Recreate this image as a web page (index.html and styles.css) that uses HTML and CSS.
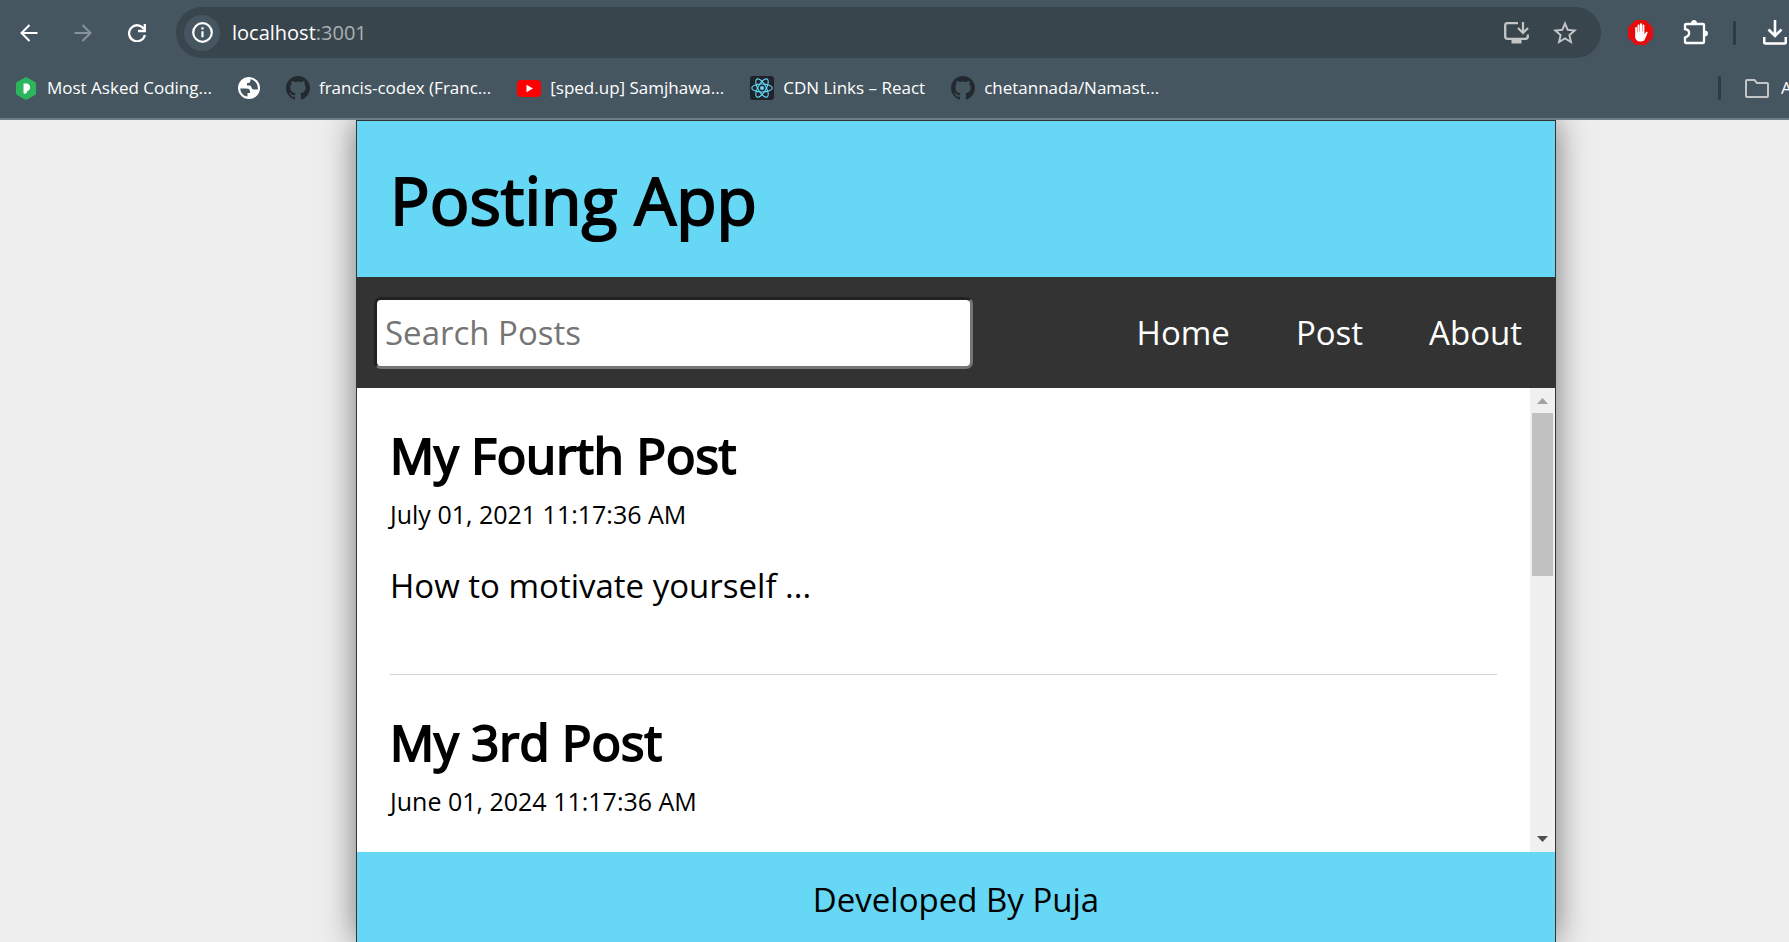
FILE: index.html
```html
<!DOCTYPE html>
<html lang="en">
<head>
<meta charset="utf-8">
<title>Posting App</title>
<link rel="stylesheet" href="styles.css">
</head>
<body>
<svg class="defs" aria-hidden="true">
  <symbol id="octocat" viewBox="0 0 16 16"><path fill="#24292f" d="M8 0C3.58 0 0 3.58 0 8c0 3.54 2.29 6.53 5.47 7.59.4.07.55-.17.55-.38 0-.19-.01-.82-.01-1.49-2.01.37-2.53-.49-2.69-.94-.09-.23-.48-.94-.82-1.13-.28-.15-.68-.52-.01-.53.63-.01 1.08.58 1.23.82.72 1.21 1.87.87 2.33.66.07-.52.28-.87.51-1.07-1.78-.2-3.64-.89-3.64-3.95 0-.87.31-1.59.82-2.15-.08-.2-.36-1.02.08-2.12 0 0 .67-.21 2.2.82.64-.18 1.32-.27 2-.27s1.36.09 2 .27c1.53-1.04 2.2-.82 2.2-.82.44 1.1.16 1.92.08 2.12.51.56.82 1.27.82 2.15 0 3.07-1.87 3.75-3.65 3.95.29.25.54.73.54 1.48 0 1.07-.01 1.93-.01 2.2 0 .21.15.46.55.38A8.01 8.01 0 0 0 16 8c0-4.42-3.58-8-8-8z"/></symbol>
</svg>
<div class="browser">
  <div class="toolbar">
    <div class="history">
      <button class="icon-button" aria-label="Back"><svg width="18" height="18" viewBox="0 0 18 18"><path d="M17.500 9H2M9.500 1L1.500 9l8 8" fill="none" stroke="#fff" stroke-width="2"/></svg></button>
      <button class="icon-button" aria-label="Forward"><svg width="18" height="18" viewBox="0 0 18 18"><path d="M.5 9H16M8.500 1l8 8-8 8" fill="none" stroke="#87929a" stroke-width="2"/></svg></button>
      <button class="icon-button" aria-label="Reload"><svg width="18" height="18" viewBox="0 0 18 18"><path d="M16 5.200A8 8 0 1 0 16.900 11" fill="none" stroke="#fff" stroke-width="2.300"/><path d="M16.800 0v7H10" fill="none" stroke="#fff" stroke-width="2.300"/></svg></button>
    </div>
    <div class="address">
      <button class="site-info" aria-label="Site information"><svg width="21" height="21" viewBox="0 0 21 21"><circle cx="10.500" cy="10.500" r="9.300" fill="none" stroke="#fff" stroke-width="2.200"/><path d="M10.500 9.300v6M10.500 5.300v2.300" stroke="#fff" stroke-width="2.200"/></svg></button>
      <div class="url">localhost<span class="port">:3001</span></div>
      <button class="icon-button" aria-label="Install app"><svg width="25" height="22" viewBox="0 0 25 22"><path d="M14 1.200H3.500Q1.200 1.200 1.200 3.500v11Q1.200 16.800 3.500 16.800h18q2.300 0 2.300-2.300V12.500" fill="none" stroke="#c3c5c7" stroke-width="2.300"/><path d="M7.500 17h10v4.500h-10z" fill="#c3c5c7"/><path d="M19 0v10M14 6l5 5 5-5" fill="none" stroke="#c3c5c7" stroke-width="2.200"/></svg></button>
      <button class="icon-button" aria-label="Bookmark this tab"><svg width="24" height="23" viewBox="2 2 20 19"><path fill="#c3c5c7" d="m22 9.240-7.190-.62L12 2 9.190 8.630 2 9.240l5.460 4.730L5.820 21 12 17.270 18.180 21l-1.630-7.030L22 9.240zM12 15.400l-3.760 2.270 1-4.280-3.320-2.880 4.380-.38L12 6.100l1.710 4.040 4.380.38-3.320 2.880 1 4.280L12 15.400z"/></svg></button>
    </div>
    <div class="actions">
      <button class="icon-button" aria-label="Ad blocker"><svg width="25" height="25" viewBox="0 0 25 25"><path fill="#e40d0d" d="M7.500 0h10L25 7.500v10L17.500 25h-10L0 17.500v-10z"/><path fill="#fff" d="M7.200 8.200c0-1.500 1.900-1.500 1.900 0v4h.4V5.500c0-1.500 2-1.500 2 0v6h.4V4.300c0-1.500 2.100-1.500 2.100 0v7.200h.4V5.500c0-1.500 2-1.500 2 0v9l1.400-2.200c.8-1.200 2.300-.5 1.700.8l-2.500 6c-.8 1.800-2.200 2.500-4.200 2.500-3.400 0-5.600-1.800-5.600-5z"/></svg></button>
      <button class="icon-button" aria-label="Extensions"><svg width="25" height="25" viewBox="0 0 25 25"><path d="M3.500 4H20q1 0 1 1v17q0 1-1 1H3q-1 0-1-1v-4.500c5.500-1.500 5.500-7.500 0-8.500V5q0-1 1.500-1z" fill="none" stroke="#fff" stroke-width="2.300"/><path d="M8 3.500a3 3.500 0 0 1 6 0zM21.500 10.500a3.500 3 0 0 1 0 6z" fill="#fff"/></svg></button>
      <span class="divider"></span>
      <button class="icon-button" aria-label="Downloads"><svg width="24" height="25" viewBox="0 0 24 25"><path d="M12 0v15M5.500 9.500L12 16l6.500-6.500M1.200 17v5.500q0 1 1 1h19.600q1 0 1-1V17" fill="none" stroke="#fff" stroke-width="2.600"/></svg></button>
    </div>
  </div>
  <div class="bookmarks">
    <a class="bookmark" href="#"><svg class="hex" width="20" height="23" viewBox="0 0 20 23"><path fill="#2db55d" d="M9 .4q1-.6 2 0l8 4.600q1 .6 1 1.700v9.600q0 1.100-1 1.700l-8 4.600q-1 .6-2 0l-8-4.600q-1-.6-1-1.700V6.700Q0 5.600 1 5z"/><path fill="#fff" d="M7.500 6.500h2.800c5 0 5 7.500.6 7.500v1c0 1.800-3.400 2.500-3.400.5z"/></svg><span>Most Asked Coding...</span></a>
    <a class="bookmark" href="#" aria-label="Website"><svg width="22" height="22" viewBox="0 0 22 22"><circle cx="11" cy="11" r="11" fill="#fff"/><path d="M2.200 11.500H8c3 0 4 1.300 4 3v1.500H9.500v3.500C5.500 19 2.500 16 2.200 11.500zM12.500 2.300v1.200c0 2-1.200 2.500-3.500 2.500v2.500h3c1.500 0 1.500 4 3.500 4h4.300c.5-4.500-2-9.200-7.300-10.200z" fill="#455660"/></svg></a>
    <a class="bookmark" href="#"><svg width="24" height="24"><use href="#octocat"/></svg><span>francis-codex (Franc...</span></a>
    <a class="bookmark" href="#"><svg width="24" height="17" viewBox="0 0 24 17"><rect width="24" height="17" rx="4" fill="#f00"/><path d="M9.500 4.800l6.500 3.700-6.500 3.700z" fill="#fff"/></svg><span>[sped.up] Samjhawa...</span></a>
    <a class="bookmark" href="#"><svg width="24" height="24" viewBox="0 0 24 24"><rect width="24" height="24" rx="3" fill="#20232a"/><g fill="none" stroke="#61dafb" stroke-width="1.100"><ellipse cx="12" cy="12" rx="10.300" ry="4"/><ellipse cx="12" cy="12" rx="10.300" ry="4" transform="rotate(60 12 12)"/><ellipse cx="12" cy="12" rx="10.300" ry="4" transform="rotate(120 12 12)"/></g><circle cx="12" cy="12" r="2" fill="#61dafb"/></svg><span>CDN Links – React</span></a>
    <a class="bookmark" href="#"><svg width="24" height="24"><use href="#octocat"/></svg><span>chetannada/Namast...</span></a>
    <div class="all">
      <span class="divider"></span>
      <a class="bookmark folder" href="#"><svg width="24" height="19" viewBox="0 0 24 19"><path d="M2 1.100h7.500L12 4h10q1 0 1 1v11.900q0 1-1 1H2q-1 0-1-1V2q0-.9 1-.9z" fill="none" stroke="#c3c5c7" stroke-width="2"/></svg><span class="clip">A</span></a>
    </div>
  </div>
</div>
<div class="page">
  <div class="app">
    <header class="header"><h1>Posting App</h1></header>
    <nav class="nav">
      <form class="search"><input type="text" aria-label="Search Posts" placeholder="Search Posts"></form>
      <ul class="links">
        <li><a href="#">Home</a></li>
        <li><a href="#">Post</a></li>
        <li><a href="#">About</a></li>
      </ul>
    </nav>
    <main class="main">
      <div class="feed">
        <article class="post">
          <h2>My Fourth Post</h2>
          <p class="date">July 01, 2021 11:17:36 AM</p>
          <p class="body">How to motivate yourself ...</p>
        </article>
        <article class="post">
          <h2>My 3rd Post</h2>
          <p class="date">June 01, 2024 11:17:36 AM</p>
        </article>
      </div>
      <div class="scrollbar" aria-hidden="true">
        <svg class="arrow" width="11" height="6" viewBox="0 0 11 6"><path d="M5.500 0L11 6H0z" fill="#a3a3a3"/></svg>
        <div class="track"><div class="thumb"></div></div>
        <svg class="arrow" width="11" height="6" viewBox="0 0 11 6"><path d="M0 0h11L5.500 6z" fill="#505050"/></svg>
      </div>
    </main>
    <footer class="footer"><p>Developed By Puja</p></footer>
  </div>
</div>
</body>
</html>
```
FILE: styles.css
```css
* { box-sizing: border-box; margin: 0; padding: 0; }
body {
  height: 100vh;
  display: flex;
  flex-direction: column;
  overflow: hidden;
  background: #eee;
  color: #000;
  font-family: "Open Sans", sans-serif;
  font-size: 33px;
}
svg { display: block; flex: none; }
button { border: 0; background: none; }
a { color: inherit; text-decoration: none; }
.defs { position: absolute; width: 0; height: 0; }

.browser {
  position: relative;
  z-index: 1;
  flex: none;
  height: 120px;
  background: #455660;
  border-bottom: 2px solid #6f7d85;
  color: #fff;
}
.toolbar { display: flex; align-items: center; padding: 7px 2px 0 20px; }
.history { display: flex; gap: 36px; margin-right: 30px; }
.address {
  flex: 1;
  display: flex;
  align-items: center;
  gap: 24px;
  height: 51px;
  padding: 0 24px 0 8px;
  border-radius: 26px;
  background: #39454c;
}
.site-info {
  display: grid;
  place-items: center;
  width: 36px;
  height: 36px;
  border-radius: 50%;
  background: #455660;
}
.url { flex: 1; margin-left: -12px; font-size: 20px; }
.port { color: #aab0b4; }
.actions { display: flex; align-items: center; gap: 27px; margin-left: 27px; }
.actions .icon-button:first-child { margin-right: 3px; }
.divider { width: 3px; height: 24px; border-radius: 1px; background: #2f3a41; }
.actions .divider { margin-left: -2px; }

.bookmarks { display: flex; align-items: center; gap: 26px; height: 60px; padding-left: 16px; font-size: 17px; line-height: 22px; white-space: nowrap; }
.bookmark { display: flex; align-items: center; gap: 9px; }
.hex { margin-right: 2px; }
.all { display: flex; align-items: center; gap: 24px; margin-left: auto; }
.folder { gap: 12px; }
.clip { width: 8px; overflow: hidden; }

.page {
  flex: 1;
  min-height: 0;
  display: grid;
  grid-template-columns: 356fr minmax(0, 1200px) 233fr;
}
.app {
  grid-column: 2;
  min-height: 0;
  display: flex;
  flex-direction: column;
  border: 1px solid #333;
  border-bottom: 0;
  background: #fff;
  box-shadow: 0 0 31px rgba(0, 0, 0, .5);
}
h1, h2 { font-weight: 400; -webkit-text-stroke: 2px #000; }
.header { padding: 32px 33px; background: #66d8f5; }
h1 { font-size: 66px; line-height: 92px; }
.nav { display: flex; align-items: center; justify-content: space-between; height: 111px; padding-left: 17px; background: #333; }
.search { flex: 0 1 599px; }
.search input {
  display: block;
  width: 100%;
  height: 72px;
  padding: 0 8px;
  border: 3px inset #767676;
  border-radius: 7px;
  background: #fff;
  font: inherit;
}
.search input::placeholder { color: #757575; }
.links { display: flex; list-style: none; color: #fff; }
.links a { display: block; padding: 33px; line-height: 45px; }
.main { flex: 1; min-height: 0; display: flex; }
.feed { flex: 1; overflow: hidden; padding: 33px; }
.post + .post { margin-top: 33px; border-top: 1px solid #d3d3d3; padding-top: 33px; }
.post + .post { margin-top: 0; }
h2 { font-size: 49px; line-height: 68px; }
.date { margin-bottom: 24px; font-size: 25px; line-height: 50px; }
.body { padding-bottom: 66px; line-height: 45px; }
.scrollbar { flex: none; display: flex; flex-direction: column; align-items: center; width: 25px; padding: 10px 2px; background: #f0f0f0; }
.track { flex: 1; width: 100%; padding: 9px 0; }
.thumb { height: 163px; background: #c1c1c1; }
.footer { height: 90px; padding-top: 25px; background: #66d8f5; text-align: center; line-height: 45px; }
```
